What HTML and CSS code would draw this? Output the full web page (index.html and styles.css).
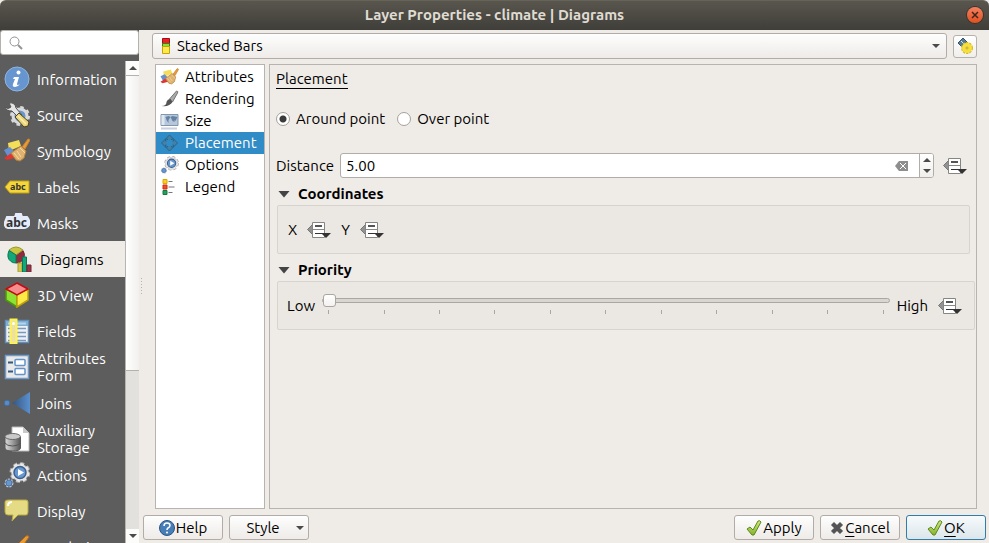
FILE: index.html
```html
<!DOCTYPE html>
<html lang="en">
<head>
<meta charset="utf-8">
<title>Layer Properties - climate | Diagrams</title>
<link rel="stylesheet" href="styles.css">
</head>
<body>
<svg class="defs" width="0" height="0" aria-hidden="true">
  <defs>
    <linearGradient id="green" x1="0" y1="0" x2="0" y2="1"><stop offset="0" stop-color="#d5e87c"/><stop offset="1" stop-color="#85b32b"/></linearGradient>
    <linearGradient id="metal" x1="0" y1="0" x2="1" y2="0"><stop offset="0" stop-color="#dadada"/><stop offset=".4" stop-color="#aaa"/><stop offset="1" stop-color="#555"/></linearGradient>
    <linearGradient id="joinblue" x1="0" y1="0" x2="1" y2="0"><stop offset="0" stop-color="#33557f"/><stop offset="1" stop-color="#5b90cf"/></linearGradient>
    <symbol id="override" viewBox="0 0 24 18">
      <path d="M0.500 8.500 6 3v11z" fill="#929292" stroke="#777"/>
      <path d="M5.500 1.500h12v15h-12z" fill="#fff" stroke="#858683"/>
      <path d="M8 5h7" stroke="#555" stroke-width="2"/>
      <path d="M6 8.500h11" stroke="#888a85"/>
      <path d="M8 12.500h7" stroke="#333"/>
      <path d="M14 12h10l-5 5z" fill="#333"/>
    </symbol>
    <symbol id="brush" viewBox="0 0 26 26">
      <path d="M4 5l11-3 2 6-12 5z" fill="#f4dd58"/>
      <path d="M0 12l6-3 6 6-8 4z" fill="#6690cf"/>
      <path d="M0 20l9-6 5 5-11 3z" fill="#df3630"/>
      <path d="M18 9l6-8q2 0 2 1l-5 9z" fill="#e89b39" stroke="#c67f2c"/>
      <path d="M17 8l5 5-2 7-4 3-4-1-5-7z" fill="#deb170" stroke="#b5803c"/>
      <path d="M16 10l5 5M10 15l5 6M13 13l4 6" stroke="#f5d9a0" fill="none"/>
    </symbol>
    <symbol id="actions" viewBox="0 0 26 26">
      <circle cx="16" cy="10.500" r="9" fill="none" stroke="#a5a5a5" stroke-width="3" stroke-dasharray="4 3.070"/>
      <circle cx="16" cy="10.500" r="8.500" fill="#e8e8e8" stroke="#b5b5b5"/>
      <circle cx="16" cy="10.500" r="8.500" fill="none" stroke="#e8e8e8" stroke-width="2" stroke-dasharray="3.500 3.180"/>
      <circle cx="16" cy="10.500" r="6" fill="#6797d0" stroke="#3e5f8a" stroke-width="1.500"/>
      <path d="M14 7l6 3.500-6 3.500z" fill="#fff"/>
      <circle cx="5" cy="21" r="3.500" fill="#6797d0" stroke="#b4c4da" stroke-width="2" stroke-dasharray="2 1"/>
      <circle cx="5" cy="21" r="3" fill="#6797d0" stroke="#53779f"/>
    </symbol>
    <symbol id="check" viewBox="0 0 16 16">
      <path d="M1 9l3-2 3 3 5-9q2-1 3 1L8 15H6z" fill="url(#green)" stroke="#598a1d"/>
    </symbol>
  </defs>
</svg>

<header class="titlebar">
  <h1>Layer Properties - climate | Diagrams</h1>
  <button class="close" aria-label="Close"><svg width="8" height="8" viewBox="0 0 8 8"><path d="M1 1l6 6M7 1L1 7" stroke="#40251b" stroke-width="1.500"/></svg></button>
</header>

<main class="dialog">
  <aside class="sidebar">
    <div class="search">
      <svg width="14" height="14" viewBox="0 0 14 14" fill="none" stroke="#929292"><circle cx="5.500" cy="5.500" r="4.500"/><path d="M9 9l4 4" stroke-width="2"/></svg>
      <input type="search" aria-label="Search">
    </div>
    <div class="nav-wrap">
      <nav class="nav">
        <a href="#"><svg viewBox="0 0 26 26"><circle cx="13" cy="13" r="12" fill="#6695d0" stroke="#8fb6e3"/><circle cx="14.500" cy="6.500" r="2" fill="#fff"/><path d="M10 11h5l-2 7q0 2 3 0-2 3-5 3-3 0-2-3l2-5H9z" fill="#fff"/></svg><span>Information</span></a>
        <a href="#"><svg viewBox="0 0 26 26"><circle cx="16" cy="14" r="7" fill="#6797d0" stroke="#d9d9d9" stroke-width="3"/><circle cx="16" cy="14" r="9" fill="none" stroke="#d9d9d9" stroke-width="2" stroke-dasharray="3.500 3.570"/><path d="M1 5q3 3 6 0L5 1q6-1 7 5l6 7-3 3-7-7q-6 0-7-4z" fill="#e4e4e4" stroke="#555"/><path d="M11 15l4-4 10 9-1 4-4 1z" fill="#ead47a" stroke="#4b4020"/><path d="M14 14l8 8" stroke="#fbefae" stroke-width="1.500"/></svg><span>Source</span></a>
        <a href="#"><svg><use href="#brush"/></svg><span>Symbology</span></a>
        <a href="#"><svg viewBox="0 0 26 26"><path d="M1 13l5-6h19v12H6z" fill="#f4d639" stroke="#c0a012"/><text x="6" y="16" class="abc-small">abc</text></svg><span>Labels</span></a>
        <a href="#"><svg viewBox="0 0 26 26"><path d="M3 7h8l1-3h5l1 3h5q3 3 2 8-2 3-5 3H4q-4-1-3-6z" fill="#e5ebfb" stroke="#e5ebfb" stroke-width="2"/><text x="2" y="17" class="abc-large">abc</text></svg><span>Masks</span></a>
        <a href="#" class="current" aria-current="page"><svg viewBox="0 0 26 26"><path d="M9 9l7-4.500A8 8 0 0 1 9 17z" fill="#8e2d40" stroke="#742536"/><path d="M9 9L2 4Q9-2 16 4z" fill="#c9c540" stroke="#9b982e"/><path d="M9 9L2 4.500Q-1 12 4 15.500q2 1.500 5 1.500z" fill="#13a77a" stroke="#087957"/><path d="M11 17h4v9h-4z" fill="#d2c852" stroke="#a9a030"/><path d="M15.500 11h4v15h-4z" fill="#13a77a" stroke="#087957"/><path d="M20 19h4v7h-4z" fill="#963548" stroke="#742536"/></svg><span>Diagrams</span></a>
        <a href="#"><svg viewBox="0 0 26 26"><path d="M2 7l11 5v13L2 18z" fill="#8ee234" stroke="#4f9809" stroke-width="1.500"/><path d="M24 7l-11 5v13l11-7z" fill="#fce946" stroke="#bda20a" stroke-width="1.500"/><path d="M13 1l11 6-11 6L2 7z" fill="#f68c8c" stroke="#c30b13" stroke-width="1.500"/></svg><span>3D View</span></a>
        <a href="#"><svg viewBox="0 0 26 26"><path d="M1.500 2.500h23v22h-23z" fill="#edf1f5" stroke="#638dba" stroke-width="1.500"/><path d="M2 3h22v5H2z" fill="#80add4"/><path d="M4 5.500h18" stroke="#b7d3e9" stroke-width="2"/><path d="M4 10.500h18M4 14.500h18M4 18.500h18M4 22.500h18" stroke="#7898bd" stroke-width="1.500"/><path d="M6.500 1.500h6v24h-6z" fill="#ece1a5" stroke="#fff34c" stroke-width="2"/><circle cx="9.500" cy="5.500" r="1.500" fill="#fff"/></svg><span>Fields</span></a>
        <a href="#"><svg viewBox="0 0 26 26"><path d="M1.500 1.500h23v23h-23z" fill="#e9e9e7" stroke="#6f9bcf" stroke-width="1.500"/><path d="M4 8.500h5M4 17.500h5" stroke="#35577e" stroke-width="2"/><rect x="11" y="5.500" width="10" height="6" rx="1" fill="#fff" stroke="#6493ca" stroke-width="1.500"/><rect x="11" y="14.500" width="10" height="6" rx="1" fill="#fff" stroke="#6493ca" stroke-width="1.500"/></svg><span>Attributes<br>Form</span></a>
        <a href="#"><svg viewBox="0 0 26 26"><path d="M8 13L26 2v22z" fill="url(#joinblue)"/><circle cx="3" cy="13" r="2.800" fill="#5c8bc1" stroke="#416e9f"/></svg><span>Joins</span></a>
        <a href="#"><svg viewBox="0 0 26 26"><path d="M8 1h11l6 6v18H8z" fill="#fff" stroke="#bbb"/><path d="M19 1v6h6z" fill="#c9c9c9"/><path d="M1 11v11q0 3 7.500 3t8-3V11z" fill="url(#metal)" stroke="#595959"/><path d="M1 17q2 3 7.500 3t8-3" fill="none" stroke="#555"/><ellipse cx="8.700" cy="10.500" rx="7.700" ry="3" fill="#c9c9c9" stroke="#666"/></svg><span>Auxiliary<br>Storage</span></a>
        <a href="#"><svg><use href="#actions"/></svg><span>Actions</span></a>
        <a href="#"><svg viewBox="0 0 26 26"><path d="M4 2h18q2 0 2 2v10q0 3-2 3h-8l-6 6 1-6H4q-3 0-3-3V4q0-2 3-2z" fill="#e6db85" stroke="#bca83e"/><path d="M4 8q0-4 4-4" fill="none" stroke="#fff" stroke-width="2"/></svg><span>Display</span></a>
        <a href="#"><svg viewBox="0 0 26 26"><path d="M14 10l8-8q3-1 3 1l-7 10z" fill="#e99b32" stroke="#b56c1e"/><path d="M6 13q6-6 11 1l-4 8z" fill="#dfac5b"/></svg><span>Rendering</span></a>
      </nav>
      <div class="scrollbar" aria-hidden="true">
        <span class="arrow-box"><i class="tri up"></i></span>
        <span class="thumb"></span>
        <span class="trough"></span>
        <span class="arrow-box"><i class="tri down"></i></span>
      </div>
    </div>
  </aside>
  <div class="splitter"></div>

  <section class="content">
    <div class="type-row">
      <div class="combo">
        <svg width="10" height="18" viewBox="0 0 10 18"><path d="M1.500 1.500h7v5h-7z" fill="#ed2026" stroke="#a50b12"/><path d="M1.500 6.500h7v3h-7z" fill="#82e236" stroke="#3d7c16"/><path d="M1.500 9.500h7v7h-7z" fill="#fce94f" stroke="#c7a30b"/></svg>
        <select aria-label="Diagram type"><option>Stacked Bars</option></select>
        <i class="tri down"></i>
      </div>
      <button class="engine" aria-label="Label engine settings"><svg width="18" height="18" viewBox="0 0 18 18"><path d="M2 6l5-5 5 5-5 5z" fill="#557b96" stroke="#34546e"/><path d="M5 4l4 4" stroke="#d9e4ec"/><circle cx="11" cy="11" r="4.500" fill="none" stroke="#d9b91b" stroke-width="3" stroke-dasharray="2 0.830"/><circle cx="11" cy="11" r="5" fill="#f5df3d"/><circle cx="11" cy="11" r="1" fill="#fff" stroke="#bba021"/></svg></button>
    </div>

    <div class="pages">
      <nav class="tabs">
        <a href="#"><svg><use href="#brush"/></svg>Attributes</a>
        <a href="#"><svg viewBox="0 0 18 18"><path d="M9 9l7-8q2 0 1 2l-5 9z" fill="#aaa" stroke="#777"/><path d="M1 16q5 0 5-4 1-3 4-3l2 3q-3 5-11 4z" fill="#555"/></svg>Rendering</a>
        <a href="#"><svg viewBox="0 0 18 18"><path d="M.5 2.500h17v11H.5z" fill="#b6c7dd" stroke="#8496ac"/><path d="M1 3h3v10H1z" fill="#e0e8ef"/><path d="M5 5l3-1 2 1-2 3v3l-2-3zM10 5l2-1 5 1-1 2-1 2-1-1v2l-2-1-1-2z" fill="#64829f"/><path d="M1 16.500h16" stroke="#8da0c0" stroke-width="2" stroke-dasharray="1 1"/></svg>Size</a>
        <a href="#" class="current" aria-current="page"><svg viewBox="0 0 18 18"><path d="M9 1l4 4h-2v2H7V5H5zM9 17l-4-4h2v-2h4v2h2zM1 9l4-4v2h2v4H5v2zM17 9l-4 4v-2h-2V7h2V5z" fill="#4481a8" stroke="#28658d"/><path d="M6 6h6v6H6z" fill="#308cc6"/></svg>Placement</a>
        <a href="#"><svg><use href="#actions"/></svg>Options</a>
        <a href="#"><svg viewBox="0 0 18 18"><path d="M2.500 1.500h4v4h-4z" fill="#fbcf27" stroke="#dba800"/><path d="M2.500 7h4v4h-4z" fill="#ee4c22" stroke="#d52b10"/><path d="M2.500 12.500h4v4h-4z" fill="#23a15a" stroke="#147a40"/><path d="M8 3.500h4M8 9h6M8 14.500h4" stroke="#777"/></svg>Legend</a>
      </nav>

      <form class="panel">
        <h2>Placement</h2>
        <div class="radios">
          <label><input type="radio" name="mode" checked>Around point</label>
          <label><input type="radio" name="mode">Over point</label>
        </div>
        <div class="distance">
          <label for="distance">Distance</label>
          <div class="spin">
            <input id="distance" type="text" value="5.00">
            <button type="button" class="clear" aria-label="Clear"><svg width="13" height="10" viewBox="0 0 13 10"><path d="M0 5l4-5h9v10H4z" fill="#8e8e8e"/><path d="M5 2l6 6M11 2L5 8" stroke="#fff"/></svg></button>
            <div class="steps">
              <button type="button" aria-label="Increase"><i class="tri up"></i></button>
              <button type="button" aria-label="Decrease"><i class="tri down"></i></button>
            </div>
          </div>
          <button type="button" class="override" aria-label="Distance override"><svg width="24" height="18"><use href="#override"/></svg></button>
        </div>

        <h3><i class="expander"></i>Coordinates</h3>
        <div class="group coords">
          <span>X</span><button type="button" class="override" aria-label="X override"><svg width="24" height="18"><use href="#override"/></svg></button>
          <span>Y</span><button type="button" class="override" aria-label="Y override"><svg width="24" height="18"><use href="#override"/></svg></button>
        </div>

        <h3><i class="expander"></i>Priority</h3>
        <div class="group priority">
          <label for="priority">Low</label>
          <div class="slider">
            <input id="priority" type="range" min="0" max="10" value="0">
            <div class="ticks"><i></i><i></i><i></i><i></i><i></i><i></i><i></i><i></i><i></i><i></i><i></i></div>
          </div>
          <span>High</span>
          <button type="button" class="override" aria-label="Priority override"><svg width="24" height="18"><use href="#override"/></svg></button>
        </div>
      </form>
    </div>

    <footer class="buttons">
      <button class="btn help"><svg width="16" height="16" viewBox="0 0 16 16"><circle cx="8" cy="8" r="7.500" fill="#477eb8" stroke="#285785"/><path d="M5 6q0-3 3-3t3 2.500q0 1.500-2 2.500-1 .5-1 2" fill="none" stroke="#fff" stroke-width="1.500"/><circle cx="8" cy="12.500" r="1" fill="#fff"/></svg>Help</button>
      <button class="btn style">Style<i class="tri down"></i></button>
      <span class="spacer"></span>
      <button class="btn"><svg width="16" height="16"><use href="#check"/></svg>Apply</button>
      <button class="btn"><svg width="14" height="16" viewBox="0 0 14 16"><path d="M2 5l2-2 3 3 3-3 2 2-3 3 3 3-2 2-3-3-3 3-2-2 3-3z" fill="#555" stroke="#555" stroke-width="1.500"/></svg><span><u>C</u>ancel</span></button>
      <button class="btn primary"><svg width="16" height="16"><use href="#check"/></svg><span><u>O</u>K</span></button>
    </footer>
  </section>
</main>
</body>
</html>
```
FILE: styles.css
```css
* { box-sizing: border-box; }

body {
  margin: 0;
  height: 100vh;
  display: flex;
  flex-direction: column;
  overflow: hidden;
  background: #efebe7;
  color: #000;
  font: 15px/20px "Ubuntu", "Noto Sans", sans-serif;
}

button, input, select { font: inherit; color: inherit; margin: 0; }
button { padding: 0; border: 0; background: none; }
a { color: inherit; text-decoration: none; }
svg { display: block; flex: none; }
h1, h2, h3 { margin: 0; font-size: 15px; }
.defs { position: absolute; }

.tri { width: 0; height: 0; border: 4px solid transparent; flex: none; }
.tri.up { border-top: 0; border-bottom: 4px solid #4a4a4a; }
.tri.down { border-bottom: 0; border-top: 4px solid #4a4a4a; }

/* Title bar */
.titlebar {
  flex: none;
  height: 30px;
  display: flex;
  align-items: center;
  padding: 0 6px 2px 22px;
  border-radius: 6px 6px 0 0;
  border-top: 1px solid #66635a;
  background: linear-gradient(#59564e, #403e39);
  color: #dfdbd2;
}
.titlebar h1 { flex: 1; text-align: center; font-weight: bold; }
.close {
  width: 16px;
  height: 16px;
  border-radius: 50%;
  background: linear-gradient(#f58060, #e1501f);
  box-shadow: 0 0 0 1px #37352f;
  display: grid;
  place-items: center;
}

.dialog { flex: 1; min-height: 0; display: flex; }

/* Sidebar */
.sidebar { flex: none; width: 139px; display: flex; flex-direction: column; background: #5d5d5d; }
.search {
  flex: none;
  height: 25px;
  display: flex;
  align-items: center;
  gap: 4px;
  padding: 0 8px;
  border: 1px solid #b5b1ad;
  border-radius: 3px;
  background: #fff;
}
.search input { flex: 1; min-width: 0; border: 0; outline: 0; background: none; }
.nav-wrap { flex: 1; min-height: 0; display: flex; margin-top: 6px; }
.nav { flex: 1; overflow: hidden; color: #fff; }
.nav a {
  height: 36px;
  display: flex;
  align-items: center;
  gap: 7px;
  padding-left: 4px;
  line-height: 17px;
}
.nav svg { width: 26px; height: 26px; }
.nav .current { background: #efebe7; color: #000; padding-left: 7px; }
.abc-small { font: bold 9px "Noto Sans", sans-serif; fill: #333; }
.abc-large { font: bold 12px "Noto Sans", sans-serif; fill: #333; }

.scrollbar {
  flex: none;
  width: 14px;
  display: flex;
  flex-direction: column;
  border-left: 1px solid #b8b4b0;
  background: #e3e1de;
}
.arrow-box { height: 14px; display: grid; place-items: center; background: #fcfcfb; }
.thumb { flex: 65; background: linear-gradient(90deg, #fff, #f1f0ee); border: solid #b5b1ad; border-width: 1px 0; }
.trough { flex: 35; }

.splitter {
  flex: none;
  align-self: center;
  width: 2px;
  height: 17px;
  margin: 0 3px 0 2px;
  background: repeating-linear-gradient(#b5b1ad 0 1px, transparent 1px 3px);
  background-size: 1px 100%;
  background-repeat: no-repeat;
}

/* Right side */
.content {
  flex: 1;
  min-width: 0;
  display: flex;
  flex-direction: column;
  padding: 3px 12px 3px 6px;
}
.type-row { flex: none; display: flex; align-items: center; gap: 6px; }
.combo {
  flex: 1;
  height: 26px;
  display: flex;
  align-items: center;
  gap: 6px;
  padding: 0 6px 0 8px;
  border: 1px solid #b2aca8;
  border-radius: 3px;
  background: linear-gradient(#fefefe, #eeebe8);
}
.combo select { flex: 1; appearance: none; border: 0; outline: 0; padding: 0; background: none; }
.engine {
  width: 24px;
  height: 23px;
  display: grid;
  place-items: center;
  border: 1px solid #b5b1ad;
  border-radius: 3px;
  background: linear-gradient(#fff, #f1efec);
}

.pages { flex: 1; min-height: 0; display: flex; gap: 4px; margin: 5px 0 6px 3px; }
.tabs { flex: none; width: 110px; border: 1px solid #b8b3af; background: #fff; padding-top: 1px; }
.tabs a { display: flex; align-items: center; gap: 6px; height: 22px; padding-left: 4px; }
.tabs svg { width: 19px; height: 18px; }
.tabs .current { background: #308cc6; color: #fff; }

.panel { flex: 1; min-width: 0; border: 1px solid #b8b3af; padding: 5px 1px 0 6px; }
.panel h2 { width: fit-content; line-height: 18px; font-weight: 400; border-bottom: 1px solid #000; }

.radios { display: flex; gap: 12px; margin-top: 20px; }
.radios label { display: flex; align-items: center; gap: 6px; }
.radios input {
  appearance: none;
  width: 14px;
  height: 14px;
  border: 1px solid #a5a19d;
  border-radius: 50%;
  background: #fff;
}
.radios input:checked { background: radial-gradient(circle, #3b3b3b 3px, #fff 4px); }

.distance { display: flex; align-items: center; gap: 6px; margin: 24px 8px 0 0; }
.spin {
  flex: 1;
  height: 25px;
  display: flex;
  align-items: center;
  border: 1px solid #b2aca8;
  border-radius: 3px;
  background: #fff;
  overflow: hidden;
}
.spin > input { flex: 1; min-width: 0; border: 0; outline: 0; padding: 0 5px; background: none; }
.clear { margin-right: 11px; }
.steps {
  width: 14px;
  align-self: stretch;
  display: flex;
  flex-direction: column;
  border-left: 1px solid #b2aca8;
  background: linear-gradient(#fff, #f1efec);
}
.steps button { flex: 1; display: grid; place-items: center; }
.distance .override { margin-left: 3px; }

.panel h3 { display: flex; align-items: center; gap: 8px; height: 20px; margin-top: 6px; padding-left: 2px; }
.expander { width: 12px; height: 7px; background: #444; clip-path: polygon(0 0, 100% 0, 50% 100%); }
.group {
  height: 49px;
  display: flex;
  align-items: center;
  margin: 1px 0 0 1px;
  border: 1px solid #d7d3cf;
  border-radius: 2px;
  background: #ebe8e3;
}
.coords { gap: 10px; margin-right: 5px; padding-left: 10px; }
.priority { gap: 7px; padding: 0 12px 0 9px; }
.priority .override { margin-left: 3px; }

.slider { flex: 1; min-width: 0; }
.slider input {
  appearance: none;
  display: block;
  width: 100%;
  height: 14px;
  background: none;
}
.slider input::-webkit-slider-runnable-track {
  height: 5px;
  border: 1px solid #aaa6a2;
  border-radius: 3px;
  background: #d9d5d1;
}
.slider input::-webkit-slider-thumb {
  appearance: none;
  width: 13px;
  height: 13px;
  margin-top: -5px;
  border: 1px solid #aaa6a2;
  border-radius: 3px;
  background: linear-gradient(#fff, #f3f2f0);
}
.ticks { display: flex; justify-content: space-between; padding: 2px 6px 4px; }
.ticks i { width: 1px; height: 4px; background: #aaa6a2; }

.buttons { flex: none; display: flex; gap: 6px; margin: 0 -9px; }
.spacer { flex: 1; }
.btn {
  width: 80px;
  height: 25px;
  display: flex;
  align-items: center;
  justify-content: center;
  gap: 1px;
  border: 1px solid #b2aca8;
  border-radius: 3px;
  background: linear-gradient(#fefefe, #eeebe8);
}
.btn u { text-underline-offset: 3px; }
.style { gap: 16px; padding-left: 12px; }
.primary { border-color: #337ca8; background: linear-gradient(#f6fafc, #dce6ea); }
```
